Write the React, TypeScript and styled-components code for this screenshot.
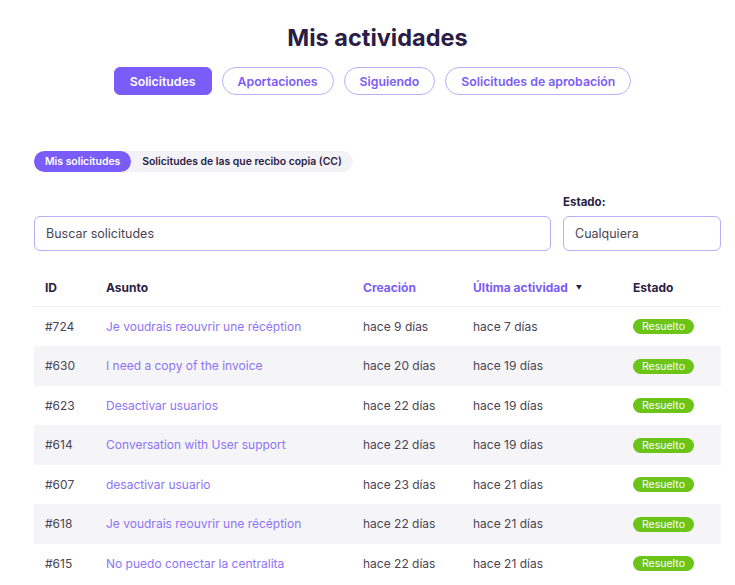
import React, { ReactElement } from "react";
import styled, { createGlobalStyle } from "styled-components";

const colors = {
  ink: "#2b1d45",
  text: "#4a4453",
  violet: "#7a5cf8",
  violetSoft: "#8d74f6",
  violetBorder: "#bcaefc",
  rowAlt: "#f5f5f8",
  line: "#ececf1",
  green: "#6cc417"
};

const GlobalStyle = createGlobalStyle`
  body {
    margin: 0;
    background: #ffffff;
    font-family: Inter, "Noto Sans", sans-serif;
    color: ${colors.text};
  }
`;

interface Request {
  id: number;
  subject: string;
  created: string;
  lastActivity: string;
}

const requests: Request[] = [
  { id: 724, subject: "Je voudrais reouvrir une récéption", created: "hace 9 días", lastActivity: "hace 7 días" },
  { id: 630, subject: "I need a copy of the invoice", created: "hace 20 días", lastActivity: "hace 19 días" },
  { id: 623, subject: "Desactivar usuarios", created: "hace 22 días", lastActivity: "hace 19 días" },
  { id: 614, subject: "Conversation with User support", created: "hace 22 días", lastActivity: "hace 19 días" },
  { id: 607, subject: "desactivar usuario", created: "hace 23 días", lastActivity: "hace 21 días" },
  { id: 618, subject: "Je voudrais reouvrir une récéption", created: "hace 22 días", lastActivity: "hace 21 días" },
  { id: 615, subject: "No puedo conectar la centralita", created: "hace 22 días", lastActivity: "hace 21 días" }
];

const Page = styled.div`
  padding: 22px 14px 0 34px;
  display: flex;
  flex-direction: column;
`;

const Title = styled.h1`
  margin: 0;
  text-align: center;
  font-size: 23.5px;
  font-weight: 700;
  color: ${colors.ink};
  line-height: 32px;
`;

const TabRow = styled.div`
  display: flex;
  justify-content: center;
  gap: 10px;
  margin-top: 13px;
  padding-right: 10px;
`;

const Tab = styled.button<{ $active?: boolean }>`
  height: 28px;
  padding: 0 15px;
  font-family: inherit;
  font-size: 12.3px;
  font-weight: 600;
  border-radius: ${p => (p.$active ? "6px" : "14px")};
  border: 1px solid ${p => (p.$active ? colors.violet : colors.violetBorder)};
  background: ${p => (p.$active ? colors.violet : "#ffffff")};
  color: ${p => (p.$active ? "#ffffff" : colors.violet)};
  cursor: pointer;
`;

const SubTabs = styled.div`
  display: flex;
  align-self: flex-start;
  margin-top: 56px;
  background: #f3f2f6;
  border-radius: 11px;
`;

const SubTab = styled.button<{ $active?: boolean }>`
  height: 21px;
  padding: 0 11px;
  border: none;
  border-radius: 11px;
  font-family: inherit;
  font-size: 10.4px;
  font-weight: 600;
  background: ${p => (p.$active ? colors.violet : "transparent")};
  color: ${p => (p.$active ? "#ffffff" : colors.ink)};
`;

const Filters = styled.div`
  display: flex;
  align-items: flex-end;
  gap: 12px;
  margin-top: 23px;
`;

const Field = styled.div<{ $grow?: boolean }>`
  display: flex;
  flex-direction: column;
  gap: 7px;
  flex: ${p => (p.$grow ? "1" : "0 0 158px")};
`;

const Label = styled.label`
  font-size: 11.5px;
  font-weight: 700;
  color: ${colors.ink};
`;

const Input = styled.div`
  height: 35px;
  box-sizing: border-box;
  border: 1px solid ${colors.violetBorder};
  border-radius: 6px;
  display: flex;
  align-items: center;
  padding: 0 11px;
  font-size: 12.5px;
  color: ${colors.text};
`;

const Table = styled.table`
  margin-top: 18px;
  width: 100%;
  border-collapse: collapse;
  table-layout: fixed;
`;

const Th = styled.th<{ $sortable?: boolean }>`
  text-align: left;
  height: 37px;
  padding: 0 0 0 11px;
  font-size: 12px;
  font-weight: 700;
  color: ${p => (p.$sortable ? colors.violet : colors.ink)};
  border-bottom: 1px solid ${colors.line};
  box-sizing: border-box;
`;

const Caret = styled.span`
  display: inline-block;
  margin-left: 8px;
  font-size: 6px;
  color: ${colors.ink};
  vertical-align: 2px;
`;

const Row = styled.tr<{ $alt?: boolean }>`
  background: ${p => (p.$alt ? colors.rowAlt : "#ffffff")};
`;

const Td = styled.td<{ $link?: boolean }>`
  height: 39.5px;
  padding: 0 0 0 11px;
  font-size: 12px;
  color: ${p => (p.$link ? colors.violetSoft : colors.text)};
  white-space: nowrap;
  overflow: hidden;
`;

const Badge = styled.span`
  display: inline-block;
  background: ${colors.green};
  color: #ffffff;
  font-size: 10.5px;
  line-height: 15px;
  padding: 0 9px;
  border-radius: 8px;
`;

export default function App(): ReactElement {
  return (
    <Page>
      <GlobalStyle />
      <Title>Mis actividades</Title>
      <TabRow>
        <Tab $active>Solicitudes</Tab>
        <Tab>Aportaciones</Tab>
        <Tab>Siguiendo</Tab>
        <Tab>Solicitudes de aprobación</Tab>
      </TabRow>

      <SubTabs>
        <SubTab $active>Mis solicitudes</SubTab>
        <SubTab>Solicitudes de las que recibo copia (CC)</SubTab>
      </SubTabs>

      <Filters>
        <Field $grow>
          <Input>Buscar solicitudes</Input>
        </Field>
        <Field>
          <Label>Estado:</Label>
          <Input>Cualquiera</Input>
        </Field>
      </Filters>

      <Table>
        <colgroup>
          <col style={{ width: 61 }} />
          <col style={{ width: 257 }} />
          <col style={{ width: 110 }} />
          <col style={{ width: 160 }} />
          <col />
        </colgroup>
        <thead>
          <tr>
            <Th>ID</Th>
            <Th>Asunto</Th>
            <Th $sortable>Creación</Th>
            <Th $sortable>
              Última actividad<Caret>▼</Caret>
            </Th>
            <Th>Estado</Th>
          </tr>
        </thead>
        <tbody>
          {requests.map((r, i) => (
            <Row key={r.id} $alt={i % 2 === 1}>
              <Td>#{r.id}</Td>
              <Td $link>{r.subject}</Td>
              <Td>{r.created}</Td>
              <Td>{r.lastActivity}</Td>
              <Td>
                <Badge>Resuelto</Badge>
              </Td>
            </Row>
          ))}
        </tbody>
      </Table>
    </Page>
  );
}
